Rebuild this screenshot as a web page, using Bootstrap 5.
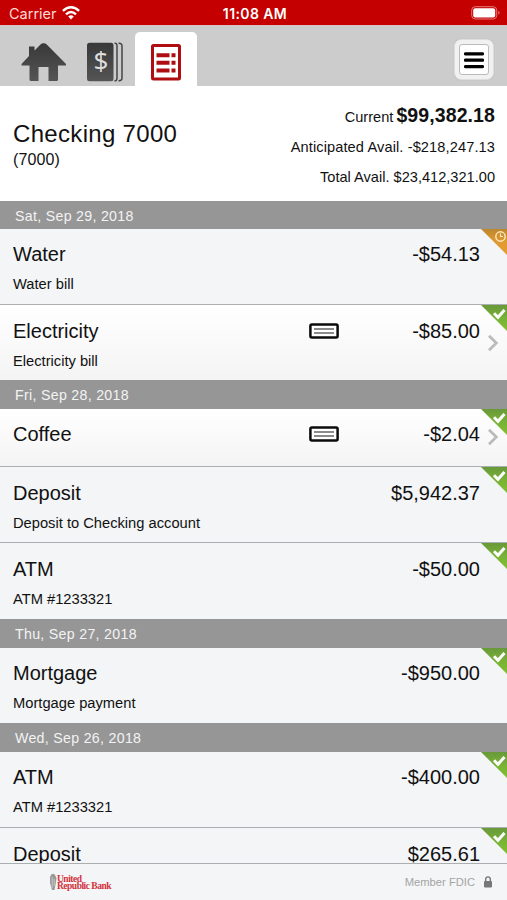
<!DOCTYPE html>
<html lang="en">
<head>
<meta charset="utf-8">
<meta name="viewport" content="width=device-width, initial-scale=1">
<title>Checking 7000</title>
<link href="https://cdn.jsdelivr.net/npm/bootstrap@5.3.0/dist/css/bootstrap.min.css" rel="stylesheet">
<style>
body{font-family:"Liberation Sans",Arial,sans-serif;color:#111;background:#f3f5f7;height:900px;line-height:1;overflow:hidden}
svg{display:block;flex:none}
.status{height:25px;background:#c40000;color:#fff;font:14.5px/25px Inter,sans-serif;padding:1px 6px 0 9px}
.status .side{width:150px}
.status .clock{font-weight:600;font-size:14px;letter-spacing:.4px}
.carrier{color:#ffd9d5;letter-spacing:0}
.wifi{margin-left:5px}
.tabs{height:61px;background:#ccc;padding:6px 13px 0 20px;border-top:1px solid #d8c2c2}
.ico-home{margin-top:10px}
.ico-cards{margin:10px 0 0 21px}
.tab-on{width:62px;height:55px;background:#fff;border-radius:5px 5px 0 0;margin-left:12px;padding:12px 0 0 16px}
.menu-btn{width:40px;height:41px;border-radius:7px;background:#f1f1f1;border:1px solid #ddd;padding:4px;margin-top:7px;box-shadow:0 0 1px #aaa}
.menu-face{background:#fff;border:1px solid #bbb;border-radius:3px;width:100%;height:100%}
.summary{height:115px;background:#fff;padding:0 12px 0 13px}
.acct{font-size:24px;line-height:28px;letter-spacing:.32px;padding-top:34px}
.acct-no{font-size:16px;line-height:24px;letter-spacing:.1px}
.bal{font-size:14.6px;line-height:30px;padding-top:14px;text-align:right}
.bal .ant{letter-spacing:.11px}
.bal b{font-size:19.5px;letter-spacing:.1px;margin-left:-1px}
.day{background:#969696;color:#f3f3f3;height:29px;line-height:31px;padding-left:15px;font-size:14.2px;letter-spacing:.3px;flex:none}
.txn{height:76px;background:#f3f5f7;padding:13.5px 27px 0 13px;border-bottom:1.5px solid #abafb1;flex:none}
.day + .txn{padding-top:12.5px}
.txn.end{height:75px;border-bottom:0}
.txn.tall{height:76px}
.txn.link{background:linear-gradient(#fff,#f4f4f5)}
.txn .name{font-size:20px;line-height:24px}
.txn .amt{font-size:20px;line-height:24px;text-align:right;width:141px}
.txn .note{font-size:14.7px;line-height:20px;margin-top:8px}
.flag{position:absolute;right:0;top:0}
.chev{position:absolute;right:8px;top:29px}
.txn.short{height:58px}
.short .chev{top:19px}
.txn.cut{height:36px;overflow:hidden}
.foot{height:36.5px;background:#f3f5f7;padding:0 14px 0 49px}
.brand{font:bold 9.5px/8px "Liberation Serif",serif;color:#d4323b;letter-spacing:-.5px}
.brand .l2{margin-top:-.5px}
.fdic{font-size:11.2px;color:#a4a4a4;margin-right:8px;padding-top:1px}
</style>
<script src="https://cdn.jsdelivr.net/npm/bootstrap@5.3.0/dist/js/bootstrap.bundle.min.js"></script>
</head>
<body>
<svg width="0" height="0" class="position-absolute">
<defs>
<linearGradient id="g1" x2="0" y2="1"><stop stop-color="#68993a"/><stop offset=".5" stop-color="#79b236"/><stop offset="1" stop-color="#82bf33"/></linearGradient>
<linearGradient id="g2" x2="0" y2="1"><stop stop-color="#bd862f"/><stop offset=".5" stop-color="#e09a31"/><stop offset="1" stop-color="#e29c32"/></linearGradient>
<linearGradient id="g3" x2="0" y2="1"><stop stop-color="#383838"/><stop offset="1" stop-color="#555"/></linearGradient>
<symbol id="ok" viewBox="0 0 26 26"><path d="M0 0H26V26Z" fill="url(#g1)"/><path d="M13 8.2l4 4L23.5 5" fill="none" stroke="#fff" stroke-width="3"/></symbol>
<symbol id="wait" viewBox="0 0 26 26"><path d="M0 0H26V26Z" fill="url(#g2)"/><circle cx="19.5" cy="7.5" r="4.7" fill="none" stroke="#ffe9bd" stroke-width="1.4"/><path d="M19.5 4.5V7.5H22" fill="none" stroke="#ffe9bd" stroke-width="1.2"/></symbol>
<symbol id="check" viewBox="0 0 30 16"><rect x="1.4" y="1.4" width="27.2" height="13" rx="1.5" fill="#fff" stroke="#0b0b0b" stroke-width="2.5"/><path d="M5 6H25M5 10H25" stroke="#666" stroke-width="1.5"/></symbol>
<symbol id="go" viewBox="0 0 12 18"><path d="M2 1.7L9.3 9L2 16.3" fill="none" stroke="#bbb" stroke-width="2.8"/></symbol>
</defs>
</svg>

<div class="status d-flex justify-content-between">
<div class="side d-flex align-items-center"><span class="carrier">Carrier</span>
<svg class="wifi" width="18" height="14" viewBox="0 0 18 14"><g fill="none" stroke="#fff" stroke-width="2.4"><path d="M.9 4.9Q9-2.4 17.1 4.9"/><path d="M4 8.3Q9 3.8 14 8.3"/></g><path d="M6.2 10.4Q9 8.2 11.8 10.4L9 13.4Z" fill="#fff"/></svg></div>
<div class="clock">11:08 AM</div>
<div class="side d-flex align-items-center justify-content-end"><svg width="30" height="14" viewBox="0 0 30 14"><rect x=".7" y=".7" width="25" height="12.3" rx="3.5" fill="none" stroke="#e37b7b"/><rect x="2.2" y="2.3" width="22" height="9.2" rx="2" fill="#fff"/><path d="M27.3 4.8Q30 6.8 27.3 8.8Z" fill="#e37b7b"/></svg></div>
</div>

<nav class="tabs d-flex align-items-start">
<svg class="ico-home" width="46" height="40" viewBox="0 0 46 40"><path d="M23.5 1.2Q22.3 1 21 2L14.5 8.5V4.5H9V14L1.5 22V23.5H9.5V37.5Q9.5 39 11 39H18.5V25H28.5V39H36.5Q38 39 38 37.5V23.5H46V22L26.5 2.2Q25 1 23.5 1.2Z" fill="url(#g3)"/></svg>
<svg class="ico-cards" width="36" height="40" viewBox="0 0 36 40"><rect width="26.5" height="38.5" rx="2.5" y=".7" fill="url(#g3)"/><path d="M27.5 1.3Q30 1 30 4V36Q30 39 27.5 38.8M31.5 1.3Q35 1 35 4V36Q35 39 31.5 38.8" fill="none" stroke="#444" stroke-width="1.5"/><text x="14" y="28" font-family="Noto Sans" font-size="26" fill="#ddd" text-anchor="middle">$</text></svg>
<div class="tab-on"><svg width="30" height="37" viewBox="0 0 30 37"><rect x="1.5" y="1.5" width="27" height="33.5" rx="1" fill="#fff" stroke="#ae0d12" stroke-width="3"/><path d="M5.5 11.2H18.5M20.5 11.2H24.5M5.5 18.8H18.5M20.5 18.8H24.5M5.5 26.4H18.5M20.5 26.4H24.5" stroke="#ae0d12" stroke-width="4"/></svg></div>
<div class="menu-btn ms-auto"><div class="menu-face d-flex align-items-center justify-content-center"><svg width="20" height="18" viewBox="0 0 20 18"><path d="M1.5 2.8H18.5M1.5 9.2H18.5M1.5 15.6H18.5" stroke="#000" stroke-width="3.2" stroke-linecap="round"/></svg></div></div>
</nav>

<header class="summary d-flex justify-content-between">
<div><div class="acct">Checking 7000</div><div class="acct-no">(7000)</div></div>
<div class="bal"><div>Current <b>$99,382.18</b></div><div class="ant">Anticipated Avail. -$218,247.13</div><div>Total Avail. $23,412,321.00</div></div>
</header>

<main class="d-flex flex-column">
<div class="day" style="height:28px">Sat, Sep 29, 2018</div>
<div class="txn position-relative"><div class="d-flex"><div class="name flex-grow-1">Water</div><div class="amt">-$54.13</div></div><div class="note">Water bill</div><svg class="flag" width="26" height="26"><use href="#wait"/></svg></div>
<div class="txn end link position-relative"><div class="d-flex"><div class="name flex-grow-1">Electricity</div><svg width="30" height="16" class="mt-1"><use href="#check"/></svg><div class="amt">-$85.00</div></div><div class="note">Electricity bill</div><svg class="flag" width="26" height="26"><use href="#ok"/></svg><svg class="chev" width="12" height="18"><use href="#go"/></svg></div>
<div class="day">Fri, Sep 28, 2018</div>
<div class="txn link short position-relative"><div class="d-flex"><div class="name flex-grow-1">Coffee</div><svg width="30" height="16" class="mt-1"><use href="#check"/></svg><div class="amt">-$2.04</div></div><svg class="flag" width="26" height="26"><use href="#ok"/></svg><svg class="chev" width="12" height="18"><use href="#go"/></svg></div>
<div class="txn position-relative"><div class="d-flex"><div class="name flex-grow-1">Deposit</div><div class="amt">$5,942.37</div></div><div class="note">Deposit to Checking account</div><svg class="flag" width="26" height="26"><use href="#ok"/></svg></div>
<div class="txn end tall position-relative"><div class="d-flex"><div class="name flex-grow-1">ATM</div><div class="amt">-$50.00</div></div><div class="note">ATM #1233321</div><svg class="flag" width="26" height="26"><use href="#ok"/></svg></div>
<div class="day">Thu, Sep 27, 2018</div>
<div class="txn end position-relative"><div class="d-flex"><div class="name flex-grow-1">Mortgage</div><div class="amt">-$950.00</div></div><div class="note">Mortgage payment</div><svg class="flag" width="26" height="26"><use href="#ok"/></svg></div>
<div class="day">Wed, Sep 26, 2018</div>
<div class="txn position-relative"><div class="d-flex"><div class="name flex-grow-1">ATM</div><div class="amt">-$400.00</div></div><div class="note">ATM #1233321</div><svg class="flag" width="26" height="26"><use href="#ok"/></svg></div>
<div class="txn cut position-relative"><div class="d-flex"><div class="name flex-grow-1">Deposit</div><div class="amt">$265.61</div></div><svg class="flag" width="26" height="26"><use href="#ok"/></svg></div>
</main>

<footer class="foot d-flex align-items-center">
<svg width="8" height="18" viewBox="0 0 8 18"><path d="M2 2Q4-.5 6 2L7.5 5L6.8 10L5.5 17H3L1 10V4Z" fill="#999"/><path d="M3.2 4V15M5.2 6V13" stroke="#ddd" stroke-width=".7"/></svg>
<div class="brand ms-auto me-auto flex-grow-1"><div>United</div><div class="l2">Republic Bank</div></div>
<div class="fdic">Member FDIC</div>
<svg width="10" height="12" viewBox="0 0 10 12"><rect x="1" y="5" width="8" height="6.5" rx="1" fill="#777"/><path d="M2.7 5V3.2a2.3 2.3 0 0 1 4.6 0V5" fill="none" stroke="#777" stroke-width="1.4"/></svg>
</footer>
</body>
</html>
